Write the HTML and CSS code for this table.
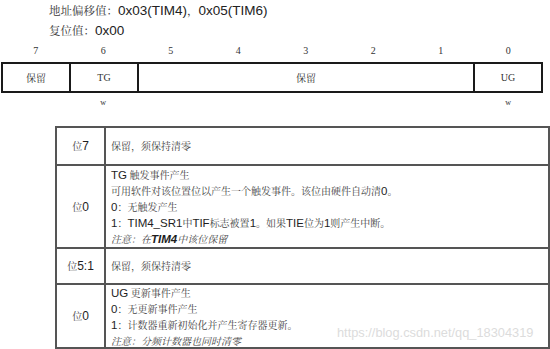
FILE: index.html
```html
<!DOCTYPE html>
<html>
<head>
<meta charset="utf-8">
<link rel="stylesheet" href="styles.css">
</head>
<body>
<div class="page">
  <div class="head">
    <div class="hline">地址偏移值：<span class="lat">0x03(TIM4)</span>，<span class="lat">0x05(TIM6)</span></div>
    <div class="hline">复位值：<span class="lat">0x00</span></div>
  </div>

  <div class="bits">
    <span>7</span><span>6</span><span>5</span><span>4</span><span>3</span><span>2</span><span>1</span><span>0</span>
  </div>
  <div class="fields">
    <div class="f f1">保留</div>
    <div class="f f1">TG</div>
    <div class="f fwide">保留</div>
    <div class="f flast">UG</div>
  </div>
  <div class="access">
    <span></span><span>w</span><span></span><span></span><span></span><span></span><span></span><span>w</span>
  </div>

  <table class="desc">
    <colgroup><col class="c1"><col class="c2"></colgroup>
    <tr class="r1">
      <td class="bit">位<b>7</b></td>
      <td class="txt">保留，须保持清零</td>
    </tr>
    <tr class="r2">
      <td class="bit">位<b>0</b></td>
      <td class="txt">
        <div class="ln"><b>TG</b> 触发事件产生</div>
        <div class="ln">可用软件对该位置位以产生一个触发事件。该位由硬件自动清<b>0</b>。</div>
        <div class="ln"><b>0</b>：无触发产生</div>
        <div class="ln"><b>1</b>：<b>TIM4_SR1</b>中<b>TIF</b>标志被置<b>1</b>。如果<b>TIE</b>位为<b>1</b>则产生中断。</div>
        <div class="ln note">注意：在<b>TIM4</b>中该位保留</div>
      </td>
    </tr>
    <tr class="r3">
      <td class="bit">位<b>5:1</b></td>
      <td class="txt">保留，须保持清零</td>
    </tr>
    <tr class="r4">
      <td class="bit">位<b>0</b></td>
      <td class="txt">
        <div class="ln"><b>UG</b> 更新事件产生</div>
        <div class="ln"><b>0</b>：无更新事件产生</div>
        <div class="ln"><b>1</b>：计数器重新初始化并产生寄存器更新。</div>
        <div class="ln note">注意：分频计数器也同时清零</div>
      </td>
    </tr>
  </table>

  <div class="wm">https://blog.csdn.net/qq_18304319</div>
</div>
</body>
</html>
```

FILE: styles.css
```css
html, body {
  margin: 0;
  padding: 0;
  background: #fff;
}
.page {
  position: relative;
  width: 550px;
  height: 349px;
  overflow: hidden;
}
.head {
  padding-left: 49px;
  font-family: "Noto Serif CJK SC", "Noto Sans CJK SC", sans-serif;
  font-size: 11.5px;
  color: #3a3a3a;
}
.hline {
  height: 20px;
  line-height: 20px;
}
.lat {
  font-family: "Liberation Sans", Arial, sans-serif;
  font-size: 13.5px;
  line-height: 1;
  color: #222;
}
.bits, .access {
  display: grid;
  grid-template-columns: repeat(8, 1fr);
  width: 540px;
  margin-left: 2px;
  font-family: "Liberation Serif", "Noto Serif CJK SC", serif;
  font-size: 10px;
  color: #333;
  text-align: center;
}
.bits {
  height: 22px;
  line-height: 22px;
}
.access {
  height: 20px;
  line-height: 20px;
  font-size: 8px;
}
.fields {
  display: flex;
  width: 542px;
  height: 31px;
  margin-left: 1px;
  box-sizing: border-box;
  border: 2px solid #1a1a1a;
  font-family: "Liberation Serif", "Noto Serif CJK SC", "Noto Sans CJK SC", serif;
  font-size: 10px;
  color: #333;
}
.f {
  display: flex;
  align-items: center;
  justify-content: center;
  box-sizing: border-box;
}
.f1 {
  width: 68px;
  border-right: 2px solid #1a1a1a;
}
.fwide {
  flex: 1;
  border-right: 2px solid #1a1a1a;
}
.flast {
  width: 66px;
}
.desc {
  margin-left: 55px;
  margin-top: 13px;
  width: 495px;
  border-collapse: collapse;
  table-layout: fixed;
  font-family: "Noto Serif CJK SC", "Noto Sans CJK SC", sans-serif;
  font-size: 10px;
  color: #444;
}
.c1 { width: 49px; }
.desc td {
  border: 2px solid #555;
  padding: 0 0 0 5px;
  vertical-align: middle;
  line-height: 16px;
  white-space: nowrap;
}
.ln {
  height: 16px;
  line-height: 16px;
}
.r4 .ln:last-child {
  height: 14px;
}
.desc td.bit {
  text-align: center;
  padding: 0;
}
.desc b {
  font-family: "Liberation Sans", Arial, sans-serif;
  font-weight: normal;
  font-size: 11.5px;
  line-height: 1;
  color: #1e1e1e;
}
.desc td.bit b {
  font-size: 12px;
}
.r1 { height: 38px; }
.r2 { height: 83px; }
.r3 { height: 36px; }
.r4 { height: 62px; }
.note {
  font-style: italic;
}
.note b {
  font-style: italic;
  font-weight: bold;
}
.wm {
  position: absolute;
  left: 337px;
  top: 325px;
  font-family: "Liberation Sans", Arial, sans-serif;
  font-size: 12.8px;
  color: #dcdcdc;
}
```
